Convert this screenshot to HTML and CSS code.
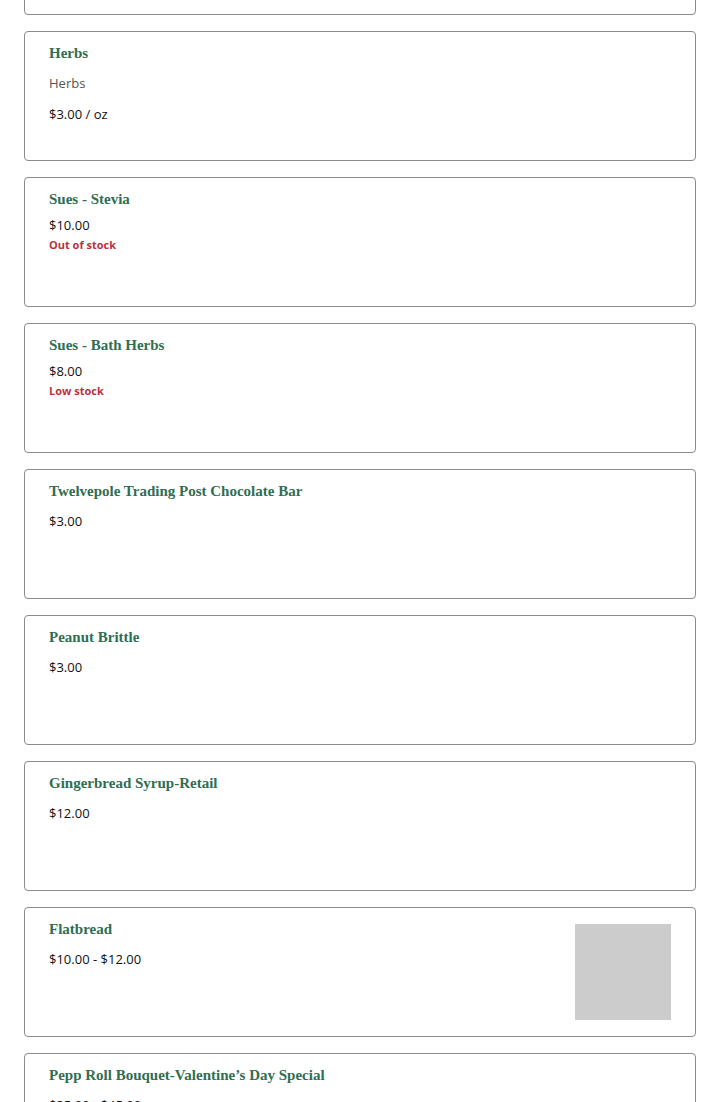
FILE: index.html
```html
<!DOCTYPE html>
<html>
<head>
<meta charset="utf-8">
<link rel="stylesheet" href="styles.css">
</head>
<body>
<main class="list">
  <article class="card">
    <div class="info">
      <h3 class="title">Honey</h3>
      <div class="price">$8.00</div>
    </div>
  </article>
  <article class="card">
    <div class="info">
      <h3 class="title">Herbs</h3>
      <p class="desc">Herbs</p>
      <div class="price">$3.00 / oz</div>
    </div>
  </article>
  <article class="card">
    <div class="info">
      <h3 class="title">Sues - Stevia</h3>
      <div class="price tight">$10.00</div>
      <div class="stock">Out of stock</div>
    </div>
  </article>
  <article class="card">
    <div class="info">
      <h3 class="title">Sues - Bath Herbs</h3>
      <div class="price tight">$8.00</div>
      <div class="stock">Low stock</div>
    </div>
  </article>
  <article class="card">
    <div class="info">
      <h3 class="title">Twelvepole Trading Post Chocolate Bar</h3>
      <div class="price">$3.00</div>
    </div>
  </article>
  <article class="card">
    <div class="info">
      <h3 class="title">Peanut Brittle</h3>
      <div class="price">$3.00</div>
    </div>
  </article>
  <article class="card">
    <div class="info">
      <h3 class="title">Gingerbread Syrup-Retail</h3>
      <div class="price">$12.00</div>
    </div>
  </article>
  <article class="card">
    <div class="info">
      <h3 class="title">Flatbread</h3>
      <div class="price">$10.00 - $12.00</div>
    </div>
    <div class="thumb"></div>
  </article>
  <article class="card">
    <div class="info">
      <h3 class="title">Pepp Roll Bouquet-Valentine’s Day Special</h3>
      <div class="price">$35.00 - $45.00</div>
    </div>
  </article>
</main>
</body>
</html>
```
FILE: styles.css
```css
html, body {
  margin: 0;
  padding: 0;
  background: #fff;
}
body {
  font-family: "Open Sans", "Liberation Sans", sans-serif;
  overflow: hidden;
}
.list {
  display: flex;
  flex-direction: column;
  gap: 16px;
  padding: 0 24px;
  margin-top: -115px;
}
.card {
  display: flex;
  justify-content: space-between;
  align-items: flex-start;
  border: 1px solid #8c8c8c;
  border-radius: 4px;
  padding: 16px 24px;
  min-height: 96px;
}
.info {
  display: flex;
  flex-direction: column;
  align-items: flex-start;
}
.title {
  margin: 0;
  font-family: "Liberation Serif", "DejaVu Serif", serif;
  font-weight: bold;
  font-size: 15px;
  line-height: 10px;
  color: #2f6e52;
}
.desc {
  margin: 16px 0 0;
  font-size: 13px;
  line-height: 18px;
  color: #555;
}
.price {
  margin-top: 16px;
  font-size: 13px;
  line-height: 18px;
  color: #111;
}
.desc + .price {
  margin-top: 13px;
}
.price.tight {
  margin-top: 12px;
}
.stock {
  margin-top: 3px;
  font-size: 11px;
  line-height: 16px;
  font-weight: bold;
  color: #c0303a;
}
.thumb {
  width: 96px;
  height: 96px;
  background: #ccc;
  flex: none;
}
```
